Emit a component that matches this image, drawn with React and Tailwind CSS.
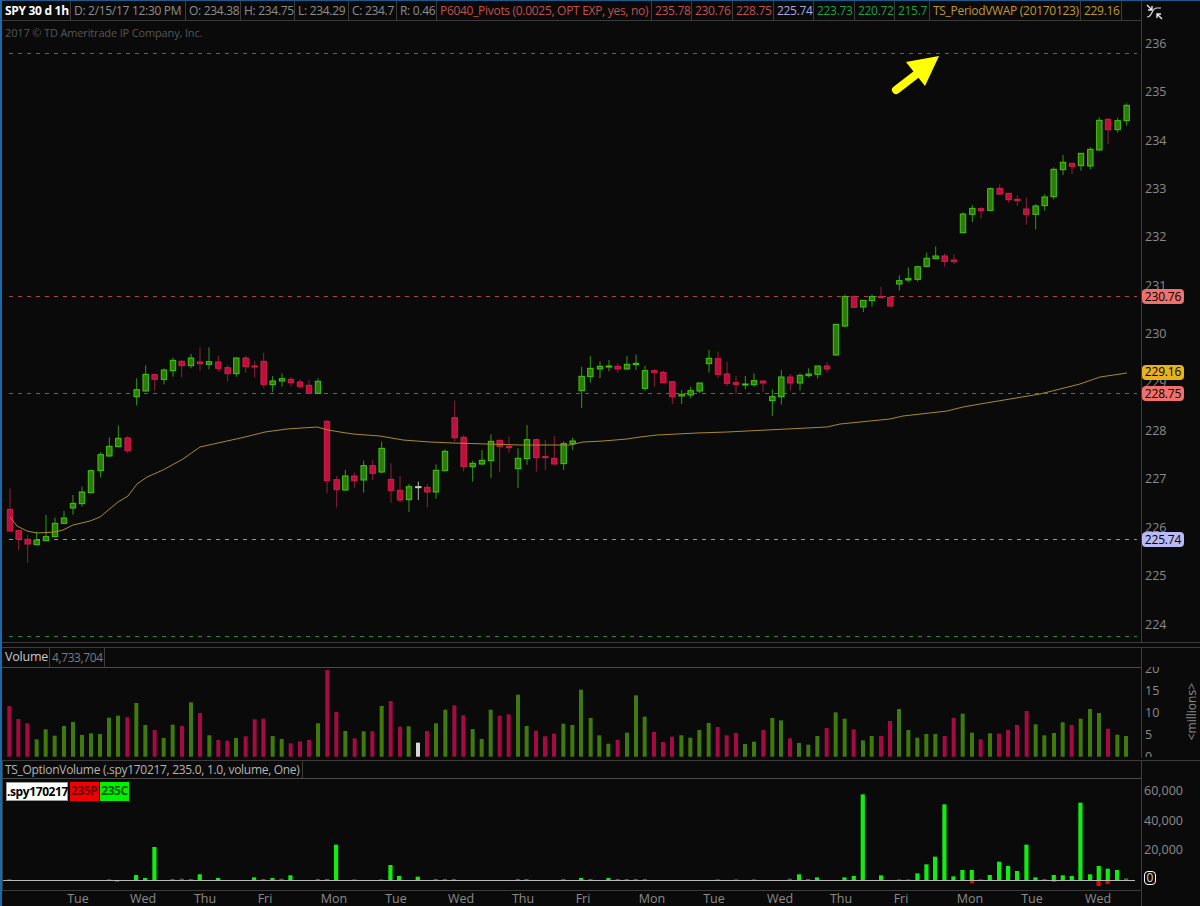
import React from "react";

const font = { fontFamily: '"Open Sans", "Noto Sans", sans-serif' };

// candle data read off the chart at 3x: [x, wickTop, bodyTop, bodyBottom, wickBottom, colour]
const seg = (ox, oy, rows) =>
  rows.map(([x, a, b, c, d, k]) => [ox + x / 3, oy + a / 3, oy + b / 3, oy + c / 3, oy + d / 3, k]);

const candles = [
  ...seg(0, 340, [
    [30, 445, 508, 573, 575, "r"], [56, 570, 572, 598, 630, "r"], [83, 585, 598, 612, 668, "r"],
    [110, 575, 600, 614, 616, "g"], [138, 525, 590, 602, 604, "g"], [165, 533, 550, 590, 592, "g"],
    [192, 513, 534, 550, 552, "g"], [219, 465, 490, 504, 524, "g"], [246, 440, 456, 491, 500, "g"],
    [273, 388, 392, 458, 460, "g"], [302, 336, 344, 392, 412, "g"], [328, 292, 319, 348, 350, "g"],
    [355, 257, 295, 320, 322, "g"], [383, 288, 294, 332, 340, "r"], [410, 115, 149, 170, 196, "g"],
    [437, 76, 103, 153, 155, "g"], [464, 100, 104, 118, 152, "r"], [492, 85, 90, 118, 133, "g"],
    [519, 53, 61, 92, 110, "g"], [545, 60, 64, 77, 112, "r"], [573, 42, 54, 77, 85, "g"],
    [600, 22, 66, 71, 92, "r"], [627, 22, 65, 73, 88, "g"], [655, 46, 66, 85, 95, "r"],
    [683, 75, 83, 101, 124, "r"], [709, 52, 54, 101, 110, "g"], [737, 48, 54, 80, 98, "r"],
    [764, 62, 78, 81, 112, "r"], [791, 38, 64, 133, 143, "r"], [818, 108, 123, 134, 156, "g"],
    [846, 100, 116, 123, 140, "g"], [873, 112, 118, 128, 140, "r"], [900, 118, 126, 139, 146, "r"],
    [927, 120, 136, 160, 162, "r"], [954, 115, 124, 160, 162, "g"], [981, 240, 244, 422, 460, "r"],
    [1010, 408, 419, 449, 502, "r"],
  ]),
  ...seg(320, 340, [
    [76, 390, 408, 450, 452, "g"], [103, 398, 408, 422, 444, "r"], [131, 362, 377, 420, 458, "g"],
    [158, 360, 377, 400, 420, "r"], [185, 305, 325, 396, 400, "g"], [213, 370, 418, 451, 488, "r"],
    [240, 408, 451, 480, 488, "r"], [267, 432, 440, 479, 516, "g"], [295, 425, 440, 442, 480, "w"],
    [322, 432, 442, 456, 502, "r"], [348, 373, 391, 456, 476, "g"], [375, 328, 334, 392, 394, "g"],
    [404, 182, 233, 293, 305, "r"], [431, 285, 292, 380, 394, "r"], [458, 362, 370, 380, 425, "g"],
    [486, 330, 361, 372, 375, "g"], [513, 283, 304, 362, 414, "g"], [539, 298, 301, 319, 396, "r"],
    [567, 290, 319, 323, 338, "r"], [594, 325, 355, 386, 444, "g"], [621, 255, 299, 356, 374, "g"],
    [649, 295, 299, 353, 395, "r"], [676, 300, 350, 353, 390, "r"], [703, 288, 355, 372, 375, "r"],
    [731, 304, 311, 371, 390, "g"], [758, 293, 303, 311, 330, "g"], [785, 80, 109, 152, 204, "g"],
    [811, 48, 85, 110, 128, "g"], [840, 64, 79, 87, 115, "g"], [867, 60, 78, 80, 94, "g"],
    [893, 70, 79, 87, 98, "r"], [921, 48, 73, 87, 90, "g"], [948, 44, 70, 74, 90, "g"],
  ]),
  ...seg(640, 230, [
    [15, 407, 422, 475, 482, "g"], [43, 418, 422, 427, 470, "r"], [70, 422, 427, 458, 460, "r"],
    [97, 453, 455, 500, 522, "r"], [125, 480, 493, 498, 522, "g"], [152, 470, 482, 495, 505, "g"],
    [179, 458, 459, 483, 490, "g"], [207, 360, 385, 401, 428, "g"], [234, 365, 386, 433, 444, "r"],
    [261, 395, 432, 460, 468, "r"], [288, 438, 458, 463, 492, "r"], [316, 438, 462, 465, 478, "g"],
    [342, 430, 452, 464, 470, "g"], [369, 452, 453, 459, 486, "r"], [397, 478, 500, 512, 558, "g"],
    [424, 420, 441, 500, 524, "g"], [451, 432, 441, 459, 482, "r"], [480, 430, 436, 459, 482, "g"],
    [506, 415, 432, 437, 442, "g"], [533, 408, 408, 433, 446, "g"], [561, 397, 408, 417, 428, "r"],
    [588, 282, 283, 375, 378, "g"], [615, 194, 200, 288, 292, "g"], [642, 195, 200, 232, 234, "r"],
    [670, 210, 211, 231, 246, "g"], [696, 193, 200, 212, 230, "g"], [723, 170, 200, 203, 204, "r"],
    [751, 198, 202, 228, 231, "r"], [778, 136, 152, 162, 182, "g"], [805, 112, 146, 150, 157, "g"],
    [833, 108, 110, 148, 155, "g"], [860, 68, 85, 109, 112, "g"], [887, 50, 78, 86, 88, "g"],
    [914, 70, 78, 94, 110, "r"], [942, 73, 90, 95, 102, "r"],
  ]),
  ...seg(930, 90, [
    [99, 367, 372, 428, 430, "g"], [127, 345, 355, 373, 396, "g"], [153, 352, 356, 362, 385, "r"],
    [181, 293, 296, 361, 363, "g"], [209, 283, 295, 312, 315, "r"], [236, 309, 310, 329, 338, "r"],
    [262, 316, 328, 332, 348, "r"], [289, 322, 357, 373, 404, "r"], [317, 342, 348, 373, 418, "g"],
    [344, 313, 321, 347, 362, "g"], [371, 232, 238, 320, 328, "g"], [399, 195, 217, 239, 255, "g"],
    [426, 218, 220, 229, 252, "r"], [453, 190, 190, 227, 242, "g"], [481, 172, 178, 228, 238, "g"],
    [508, 82, 91, 180, 182, "g"], [534, 84, 88, 119, 162, "r"], [563, 83, 92, 119, 128, "g"],
    [590, 40, 46, 92, 107, "g"],
  ]),
];

const candleColors = {
  r: { wick: "#8f1f38", fill: "#bb0f3e", line: "#d81c48" },
  g: { wick: "#2f9a12", fill: "#2f7a0c", line: "#41c80f" },
  w: { wick: "#b0b0b0", fill: "#b0b0b0", line: "#c8c8c8" },
};

const vwap = [
  [10, 517], [17, 526], [27, 531], [37, 533], [55, 532], [63, 530], [73, 525], [90, 521], [100, 517],
  [118, 502], [128, 496], [137, 484], [147, 477], [163, 470], [183, 459], [200, 447], [227, 441],
  [245, 437], [265, 432], [287, 429], [317, 427], [328, 430], [340, 432], [353, 434], [380, 436],
  [403, 440], [430, 442], [453, 443], [487, 444], [520, 445], [570, 445], [583, 442], [603, 441],
  [627, 439], [640, 437], [657, 435], [697, 433], [727, 432], [827, 427], [840, 424], [890, 419],
  [903, 416], [947, 411], [963, 407], [980, 404], [1010, 399], [1040, 394], [1080, 384], [1100, 377],
  [1127, 373],
];

const volOf = (ox, rows) => rows.map(([x, t, k]) => [ox + x / 3, 640 + t / 3, k]);

const volume = [
  ...volOf(0, [
    [28, 198, "r"], [55, 237, "r"], [82, 250, "r"], [110, 298, "g"], [137, 268, "g"], [164, 287, "g"],
    [192, 258, "g"], [219, 246, "g"], [246, 285, "g"], [273, 280, "g"], [300, 282, "g"], [327, 233, "g"],
    [354, 227, "g"], [382, 232, "r"], [409, 189, "g"], [436, 255, "g"], [464, 270, "r"], [491, 294, "g"],
    [518, 254, "g"], [546, 258, "r"], [573, 187, "g"], [600, 219, "r"], [628, 286, "g"], [655, 300, "r"],
    [682, 302, "r"], [708, 294, "g"], [737, 289, "r"], [764, 238, "r"], [790, 236, "r"], [818, 288, "g"],
    [845, 297, "g"], [872, 310, "r"], [900, 304, "r"], [927, 300, "r"], [954, 250, "g"], [982, 90, "r"],
    [1009, 216, "r"], [1036, 273, "g"], [1064, 295, "r"], [1091, 274, "g"], [1117, 274, "r"], [1145, 198, "g"],
    [1172, 183, "r"],
  ]),
  ...volOf(400, [
    [0, 260, "r"], [26, 259, "g"], [54, 308, "w"], [81, 273, "r"], [108, 250, "g"], [136, 209, "g"],
    [163, 196, "r"], [190, 226, "r"], [218, 267, "g"], [245, 297, "g"], [272, 209, "g"], [299, 228, "r"],
    [326, 223, "r"], [354, 164, "g"], [380, 258, "g"], [408, 272, "r"], [435, 289, "r"], [462, 281, "r"],
    [490, 251, "g"], [517, 255, "g"], [543, 149, "g"], [572, 234, "g"], [598, 286, "g"], [625, 311, "g"],
    [653, 300, "r"], [681, 278, "g"], [708, 166, "g"], [734, 230, "g"], [762, 276, "r"], [789, 306, "r"],
    [816, 290, "r"], [844, 286, "g"], [871, 293, "g"], [898, 270, "g"], [926, 249, "g"], [953, 261, "r"],
    [980, 286, "r"], [1008, 279, "r"], [1035, 312, "g"], [1062, 305, "g"], [1090, 270, "r"], [1117, 234, "g"],
    [1143, 241, "g"], [1170, 295, "r"], [1197, 309, "g"],
  ]),
  ...volOf(800, [
    [25, 314, "g"], [52, 288, "g"], [80, 264, "r"], [107, 217, "g"], [134, 236, "g"], [161, 268, "r"],
    [189, 301, "g"], [215, 288, "g"], [243, 288, "r"], [270, 243, "r"], [297, 207, "g"], [325, 270, "g"],
    [352, 293, "g"], [379, 282, "g"], [406, 282, "g"], [434, 288, "r"], [461, 234, "r"], [488, 221, "g"],
    [516, 278, "g"], [542, 298, "r"], [570, 280, "g"], [597, 281, "r"], [624, 270, "r"], [651, 255, "r"],
    [680, 213, "r"], [707, 253, "g"], [733, 286, "g"], [762, 279, "g"], [788, 247, "g"], [815, 255, "r"],
    [842, 236, "g"], [870, 207, "g"], [897, 219, "g"], [924, 266, "r"], [952, 284, "g"], [978, 288, "g"],
  ]),
];

const volColors = { r: "#a50b42", g: "#3f7a0a", w: "#d8d8d8" };

const optOf = (ox, rows) => rows.map(([x, t]) => [ox + x / 3, 760 + t / 3]);

const optionCalls = [
  ...optOf(0, [
    [28, 358], [327, 358], [408, 345], [435, 354], [463, 261], [517, 357], [545, 356], [572, 357], [599, 343],
    [654, 354], [762, 352], [790, 357], [817, 354], [844, 356], [871, 346], [953, 357], [981, 357], [1008, 254],
    [1063, 358], [1143, 358], [1171, 315], [1197, 348],
  ]),
  ...optOf(400, [
    [53, 350], [107, 357], [134, 357], [161, 357], [353, 357], [379, 357], [490, 357], [543, 354], [571, 357],
    [625, 354], [653, 357], [680, 357], [707, 357], [734, 357], [953, 358], [1008, 358], [1062, 358], [1169, 356],
    [1197, 343],
  ]),
  ...optOf(800, [
    [24, 357], [51, 352], [133, 352], [161, 348], [188, 103], [243, 346], [297, 358], [325, 358], [352, 340],
    [379, 313], [405, 290], [433, 133], [460, 349], [487, 330], [515, 330], [542, 358], [569, 345], [597, 305],
    [624, 318], [651, 333], [679, 254], [706, 352], [733, 357], [761, 345], [788, 346], [815, 348], [841, 128],
    [870, 343], [896, 318], [923, 326], [951, 330], [978, 355],
  ]),
];

const optionPuts = [[117, 882], [972, 883], [1054, 882], [1098.5, 886], [1107.5, 884], [1126, 881]];

const headerCells = [
  { text: "SPY 30 d 1h", w: "w-[69px]", c: "text-white font-bold" },
  { text: "D: 2/15/17 12:30 PM", w: "w-[115px]", c: "text-[#8e8e8e]" },
  { text: "O: 234.38", w: "w-[55px]", c: "text-[#8e8e8e]" },
  { text: "H: 234.75", w: "w-[54px]", c: "text-[#8e8e8e]" },
  { text: "L: 234.29", w: "w-[54px]", c: "text-[#8e8e8e]" },
  { text: "C: 234.7", w: "w-[48px]", c: "text-[#8e8e8e]" },
  { text: "R: 0.46", w: "w-[40px]", c: "text-[#8e8e8e]" },
  { text: "P6040_Pivots (0.0025, OPT EXP, yes, no)", w: "w-[215px]", c: "text-[#c4504f]" },
  { text: "235.78", w: "w-[40px]", c: "text-[#c4504f]" },
  { text: "230.76", w: "w-[41px]", c: "text-[#c4504f]" },
  { text: "228.75", w: "w-[41px]", c: "text-[#c4504f]" },
  { text: "225.74", w: "w-[40px]", c: "text-[#a9a9e6]" },
  { text: "223.73", w: "w-[41px]", c: "text-[#1fa045]" },
  { text: "220.72", w: "w-[40px]", c: "text-[#1fa045]" },
  { text: "215.7", w: "w-[35px]", c: "text-[#1fa045]" },
  { text: "TS_PeriodVWAP (20170123)", w: "w-[151px]", c: "text-[#c09a2c]" },
  { text: "229.16", w: "w-[41px]", c: "text-[#c09a2c]" },
];

const priceTicks = [236, 235, 234, 233, 232, 231, 230, 229, 228, 227, 226, 225, 224];

const levels = [
  { y: 53.5, color: "#a8454c" },
  { y: 296.5, color: "#a8454c" },
  { y: 393.5, color: "#a8454c" },
  { y: 539.5, color: "#8f8fb8" },
  { y: 636.5, color: "#1f8a3f" },
];

const timeLabels = [
  ["Tue", 78], ["Wed", 143], ["Thu", 205], ["Fri", 265], ["Mon", 334], ["Tue", 396], ["Wed", 461], ["Thu", 523],
  ["Fri", 583], ["Mon", 652], ["Tue", 714], ["Wed", 780], ["Thu", 841], ["Fri", 901], ["Mon", 970], ["Tue", 1032],
  ["Wed", 1098],
];

const Badge = ({ className, children }) => (
  <div className={`absolute left-0 w-[42px] h-[15px] rounded-sm flex items-center justify-center text-[12px] tracking-[-0.2px] text-black ${className}`}>
    {children}
  </div>
);

const App = () => {
  return (
    <div className="w-[1200px] h-[906px] flex bg-[#0a0a0b] overflow-hidden text-[#8e8e8e]" style={font}>
      <div className="w-[2px] bg-[#1c6aa8]" />
      <div className="w-[1198px] flex flex-col">
        <div className="h-[1px] bg-[#1c5a8c]" />

        {/* price panel */}
        <div className="h-[641px] flex">
          <div className="w-[1140px] flex flex-col border-r border-[#3c3c3c]">
            <div className="h-[20px] flex items-center border-b border-[#3c3c3c] text-[12px] tracking-[-0.3px] whitespace-nowrap">
              {headerCells.map((cell) => (
                <div key={cell.text} className={`${cell.w} ${cell.c} h-full pl-[3px] flex items-center border-r border-[#3c3c3c]`}>
                  {cell.text}
                </div>
              ))}
            </div>
            <div className="relative flex-1">
              <div className="absolute left-[3px] top-[4px] text-[11px] tracking-[-0.15px] text-[#565656]">2017 © TD Ameritrade IP Company, Inc.</div>
              <svg width="1139" height="620" viewBox="2 21 1139 620" className="block">
                {levels.map((l) => (
                  <line key={l.y} x1="9" x2="1137" y1={l.y} y2={l.y} stroke={l.color} strokeDasharray="4 5" />
                ))}
                {candles.map(([x, a, b, c, d, k], i) => (
                  <g key={i}>
                    <line x1={x} x2={x} y1={a} y2={d} stroke={candleColors[k].wick} />
                    <rect x={x - 2.7} y={b} width="5.4" height={Math.max(c - b, 1)} fill={candleColors[k].fill} stroke={candleColors[k].line} />
                  </g>
                ))}
                <polyline points={vwap.map((p) => p.join(",")).join(" ")} fill="none" stroke="#a88a2c" strokeWidth="1" />
                <path d="M896 90 L922 70" stroke="#ffff00" strokeWidth="8" strokeLinecap="round" />
                <polygon points="939,56 906,62 925,86" fill="#ffff00" />
              </svg>
            </div>
          </div>
          <div className="relative w-[57px] pl-[3px] pt-[19px] text-[12.5px] text-[#8a8a8a]">
            <svg width="18" height="18" viewBox="0 0 18 18" className="absolute left-[4px] top-[2px]" fill="none">
              <path d="M1 14 C7 14 5 5 11 5 L15 5" stroke="#d8d8d8" strokeWidth="1.2" />
              <path d="M1 2 L6 7 M6 3 L6 7 L2 7" stroke="#e8e8e8" strokeWidth="1.4" />
              <path d="M16 16 L11 11 M11 15 L11 11 L15 11" stroke="#e8e8e8" strokeWidth="1.4" />
            </svg>
            {priceTicks.map((t) => (
              <div key={t} className="h-[48.4px] flex items-center">{t}</div>
            ))}
            <Badge className="top-[288px] bg-[#f0706c]">230.76</Badge>
            <Badge className="top-[363.5px] bg-[#e8b21e]">229.16</Badge>
            <Badge className="top-[385px] bg-[#f0706c]">228.75</Badge>
            <Badge className="top-[531px] bg-[#b9b9f5]">225.74</Badge>
          </div>
        </div>

        <div className="h-[6px] border-y border-[#3c3c3c]" />

        {/* volume panel */}
        <div className="h-[110px] flex">
          <div className="w-[1140px] flex flex-col border-r border-[#3c3c3c]">
            <div className="h-[20px] flex border-b border-[#4a4a4a] pl-[1px]">
              <div className="w-[47px] pl-[2px] text-[12.5px] tracking-[-0.2px] text-[#c8c8c8] flex items-center border-r border-[#3c3c3c]">Volume</div>
              <div className="w-[55px] pl-[2px] text-[12px] tracking-[-0.4px] text-[#7a7a7a] flex items-center border-r border-[#3c3c3c]">4,733,704</div>
            </div>
            <svg width="1139" height="90" viewBox="2 668 1139 90" className="block">
              {volume.map(([x, t, k], i) => (
                <rect key={i} x={x - 2} y={t} width="4" height={756.7 - t} fill={volColors[k]} />
              ))}
            </svg>
          </div>
          <div className="relative w-[57px] h-[90px] mt-[19px] overflow-hidden pl-[3px] text-[12.5px] text-[#8a8a8a]">
            <div className="-mt-[9px]">
              {[20, 15, 10, 5, 0].map((t) => (
                <div key={t} className="h-[22px] flex items-center">{t}</div>
              ))}
            </div>
            <div className="absolute right-[0px] top-[16px] text-[12px] leading-[14px] whitespace-nowrap rotate-180 [writing-mode:vertical-rl]">&lt;millions&gt;</div>
          </div>
        </div>

        <div className="h-[3px] border-b border-[#3c3c3c]" />

        {/* option volume panel */}
        <div className="h-[129px] flex">
          <div className="w-[1140px] flex flex-col border-r border-[#3c3c3c] border-l">
            <div className="h-[18px] flex border-b border-[#4a4a4a] text-[12px] tracking-[-0.3px]">
              <div className="w-[300px] pl-[2px] text-[#b4b4b4] flex items-center border-r border-[#3c3c3c] whitespace-nowrap">
                TS_OptionVolume (.spy170217, 235.0, 1.0, volume, One)
              </div>
            </div>
            <div className="relative">
              <div className="absolute left-[3px] top-[3px] flex gap-[1.5px] text-[12px] tracking-[-0.4px] leading-[18px] font-bold">
                <div className="w-[62px] h-[19px] bg-white text-black text-center border border-[#999]">.spy170217</div>
                <div className="w-[29px] h-[19px] bg-[#f00000] text-[#700000] text-center">235P</div>
                <div className="w-[29px] h-[19px] bg-[#00f000] text-[#035c03] text-center">235C</div>
              </div>
              <svg width="1138" height="111" viewBox="3 779 1138 111" className="block">
                {optionCalls.map(([x, t], i) => (
                  <rect key={i} x={x - 2} y={t} width="4.2" height={880 - t} fill={t > 878 ? "#3a6a3a" : "#10ee10"} />
                ))}
                {optionPuts.map(([x, b], i) => (
                  <rect key={i} x={x - 2} y={880} width="4.2" height={b - 880} fill="#f00000" />
                ))}
                <line x1="3" x2="1135" y1="880.5" y2="880.5" stroke="#b8b8b8" />
              </svg>
            </div>
          </div>
          <div className="relative w-[57px] pl-[2px] pt-[16px] text-[12.5px] text-[#8a8a8a]">
            {["60,000", "40,000", "20,000"].map((t) => (
              <div key={t} className="h-[29.5px] flex items-center">{t}</div>
            ))}
            <div className="w-[12px] h-[14px] mt-[5px] flex items-center justify-center rounded-sm border border-white text-[#d8d8d8] text-[12px]">0</div>
          </div>
        </div>

        {/* time axis */}
        <div className="h-[16px] w-[1140px] flex pt-[1px] border-t border-[#3c3c3c] border-r text-[12.5px] leading-[14px] text-[#8a8a8a] whitespace-nowrap">
          {timeLabels.map(([label, x], i) => (
            <div key={i} className="w-0 flex justify-center" style={{ marginLeft: i === 0 ? x - 2 : x - timeLabels[i - 1][1] }}>
              {label}
            </div>
          ))}
        </div>
      </div>
    </div>
  );
};

export default App;
